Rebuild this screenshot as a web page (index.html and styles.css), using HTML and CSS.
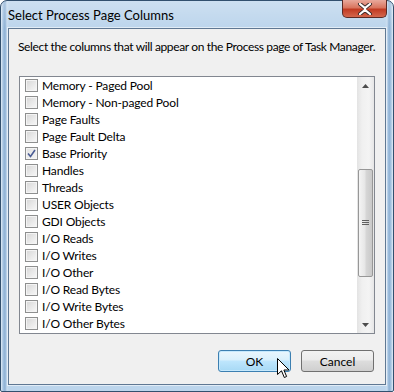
FILE: index.html
```html
<!DOCTYPE html>
<html>
    <head>
        <meta charset="utf-8">
        <title>Select Process Page Columns</title>
        <link rel="stylesheet" href="styles.css">
    </head>
    <body>
        <div class="window">
            <div class="titlebar">
                <span class="title">Select Process Page Columns</span>
                <div class="close-btn">
                    <svg width="16" height="12" viewBox="0 0 16 12">
                        <path d="M3 1 L8 5 L13 1 M3 11 L8 7 L13 11" fill="none" stroke="#3b2a2a" stroke-width="4" stroke-linecap="round"/>
                        <path d="M3 1 L8 5 L13 1 M3 11 L8 7 L13 11 M8 5 L8 7" fill="none" stroke="#ffffff" stroke-width="2.2" stroke-linecap="round"/>
                    </svg>
                </div>
            </div>
            <div class="client">
                <p class="intro">Select the columns that will appear on the Process page of Task Manager.</p>
                <div class="list">
                    <ul class="items">
                        <li><span class="check"></span>Memory - Paged Pool</li>
                        <li><span class="check"></span>Memory - Non-paged Pool</li>
                        <li><span class="check"></span>Page Faults</li>
                        <li><span class="check"></span>Page Fault Delta</li>
                        <li><span class="check checked">
                            <svg width="9" height="9" viewBox="0 0 9 9"><path d="M1 4.5 L3.5 7.5 L8 1" fill="none" stroke="#4a5c94" stroke-width="1.6"/></svg>
                        </span>Base Priority</li>
                        <li><span class="check"></span>Handles</li>
                        <li><span class="check"></span>Threads</li>
                        <li><span class="check"></span>USER Objects</li>
                        <li><span class="check"></span>GDI Objects</li>
                        <li><span class="check"></span>I/O Reads</li>
                        <li><span class="check"></span>I/O Writes</li>
                        <li><span class="check"></span>I/O Other</li>
                        <li><span class="check"></span>I/O Read Bytes</li>
                        <li><span class="check"></span>I/O Write Bytes</li>
                        <li><span class="check"></span>I/O Other Bytes</li>
                    </ul>
                    <div class="scrollbar">
                        <div class="arrow"><svg width="7" height="4" viewBox="0 0 7 4"><path d="M0 4 L3.5 0 L7 4 Z" fill="#4d4d4d"/></svg></div>
                        <div class="track">
                            <div class="thumb"><span class="grip"></span></div>
                        </div>
                        <div class="arrow"><svg width="7" height="4" viewBox="0 0 7 4"><path d="M0 0 L3.5 4 L7 0 Z" fill="#4d4d4d"/></svg></div>
                    </div>
                </div>
                <div class="buttons">
                    <button class="btn default">OK</button>
                    <button class="btn">Cancel</button>
                </div>
            </div>
            <svg class="cursor" width="13" height="21" viewBox="0 0 13 21">
                <path d="M0.5 0.5 L0.5 16.5 L4.5 12.8 L7.3 19.5 L9.6 18.5 L6.9 12 L12 12 Z" fill="#ffffff" stroke="#000000" stroke-width="1" stroke-linejoin="round"/>
            </svg>
        </div>
    </body>
</html>
```
FILE: styles.css
```css
body{
    margin: 0;
    width: 394px;
    height: 392px;
    background: #ffffff;
    font-family: Lato, "Noto Sans", sans-serif;
    font-size: 12px;
    letter-spacing: -0.15px;
    color: #000000;
}

.window{
    position: relative;
    box-sizing: border-box;
    width: 394px;
    height: 392px;
    padding: 0 7px 6px 7px;
    display: flex;
    flex-direction: column;
    border: 1px solid #32506e;
    border-radius: 7px 7px 2px 2px;
    background:
        linear-gradient(to bottom, rgba(255,255,255,0.25) 0, rgba(255,255,255,0) 28px),
        linear-gradient(to right, #e2edf7 0px, #a6c4e1 2px, #8cb0d4 4px, #c8dcef 6px, #bcd5ec 8px, #bcd5ec 384px, #c8dcef 386px, #8cb0d4 388px, #a6c4e1 390px, #e2edf7 392px);
}

.titlebar{
    height: 28px;
    display: flex;
    justify-content: space-between;
    align-items: flex-start;
}

.title{
    margin-top: 7px;
    line-height: 15px;
    font-size: 13px;
    letter-spacing: 0;
}

.close-btn{
    width: 45px;
    height: 18px;
    margin-top: -1px;
    margin-right: -1px;
    box-sizing: border-box;
    border: 1px solid #5b2a25;
    border-top: none;
    border-radius: 0 0 5px 5px;
    background: linear-gradient(to bottom, #e9a99c 0%, #d9755f 45%, #c13b23 55%, #d4674d 100%);
    display: flex;
    align-items: center;
    justify-content: center;
}

.client{
    flex: 1;
    border: 1px solid #5f7893;
    box-shadow: 0 0 0 1px rgba(255,255,255,0.55);
    background: #f0f0f0;
    padding: 10px 10px 12px 10px;
    display: flex;
    flex-direction: column;
}

.intro{
    margin: 0 0 22px -1px;
    line-height: 15px;
    white-space: nowrap;
    letter-spacing: -0.36px;
}

.list{
    height: 258px;
    box-sizing: border-box;
    border: 1px solid #828790;
    background: #ffffff;
    display: flex;
}

.items{
    flex: 1;
    list-style: none;
    margin: 0;
    padding: 0 0 0 5px;
}

.items li{
    height: 17px;
    display: flex;
    align-items: center;
    line-height: 17px;
}

.check{
    width: 13px;
    height: 13px;
    box-sizing: border-box;
    border: 1px solid #8e8f8f;
    margin-right: 4px;
    background: linear-gradient(135deg, #d6d6d6 0%, #ebebeb 60%, #f8f8f8 100%);
    box-shadow: inset 0 0 0 1px #f4f4f4;
    display: flex;
    align-items: center;
    justify-content: center;
}

.check.checked{
    background: linear-gradient(135deg, #e2e2e2 0%, #f4f4f4 100%);
}

.scrollbar{
    width: 17px;
    display: flex;
    flex-direction: column;
    background: linear-gradient(to right, #e3e3e3, #f0f0f0 30%, #f4f4f4 70%, #e6e6e6);
}

.arrow{
    height: 17px;
    display: flex;
    align-items: center;
    justify-content: center;
}

.track{
    flex: 1;
    padding-top: 75px;
}

.thumb{
    height: 108px;
    margin: 0 1px;
    box-sizing: border-box;
    border: 1px solid #979797;
    border-radius: 2px;
    background: linear-gradient(to right, #f4f4f4 0%, #e6e6e6 45%, #d6d6d6 55%, #c9c9c9 100%);
    display: flex;
    align-items: center;
    justify-content: center;
}

.grip{
    width: 7px;
    height: 6px;
    background: repeating-linear-gradient(to bottom, #5f5f5f 0, #5f5f5f 1px, transparent 1px, transparent 2px);
}

.buttons{
    margin-top: 16px;
    display: flex;
    justify-content: flex-end;
    gap: 10px;
    padding-right: 1px;
}

.btn{
    width: 73px;
    height: 22px;
    border: 1px solid #707070;
    border-radius: 3px;
    background: linear-gradient(to bottom, #f2f2f2 0%, #ebebeb 45%, #dddddd 50%, #cfcfcf 100%);
    font-family: Lato, "Noto Sans", sans-serif;
    font-size: 12px;
    color: #000000;
    padding: 0;
}

.btn.default{
    border-color: #3c7fb1;
    background: linear-gradient(to bottom, #eaf6fd 0%, #d9f0fc 45%, #bee6fd 50%, #a7d9f5 100%);
    box-shadow: inset 0 0 0 1px #c6e9fd;
}

.cursor{
    position: absolute;
    left: 276px;
    top: 357px;
}
```
